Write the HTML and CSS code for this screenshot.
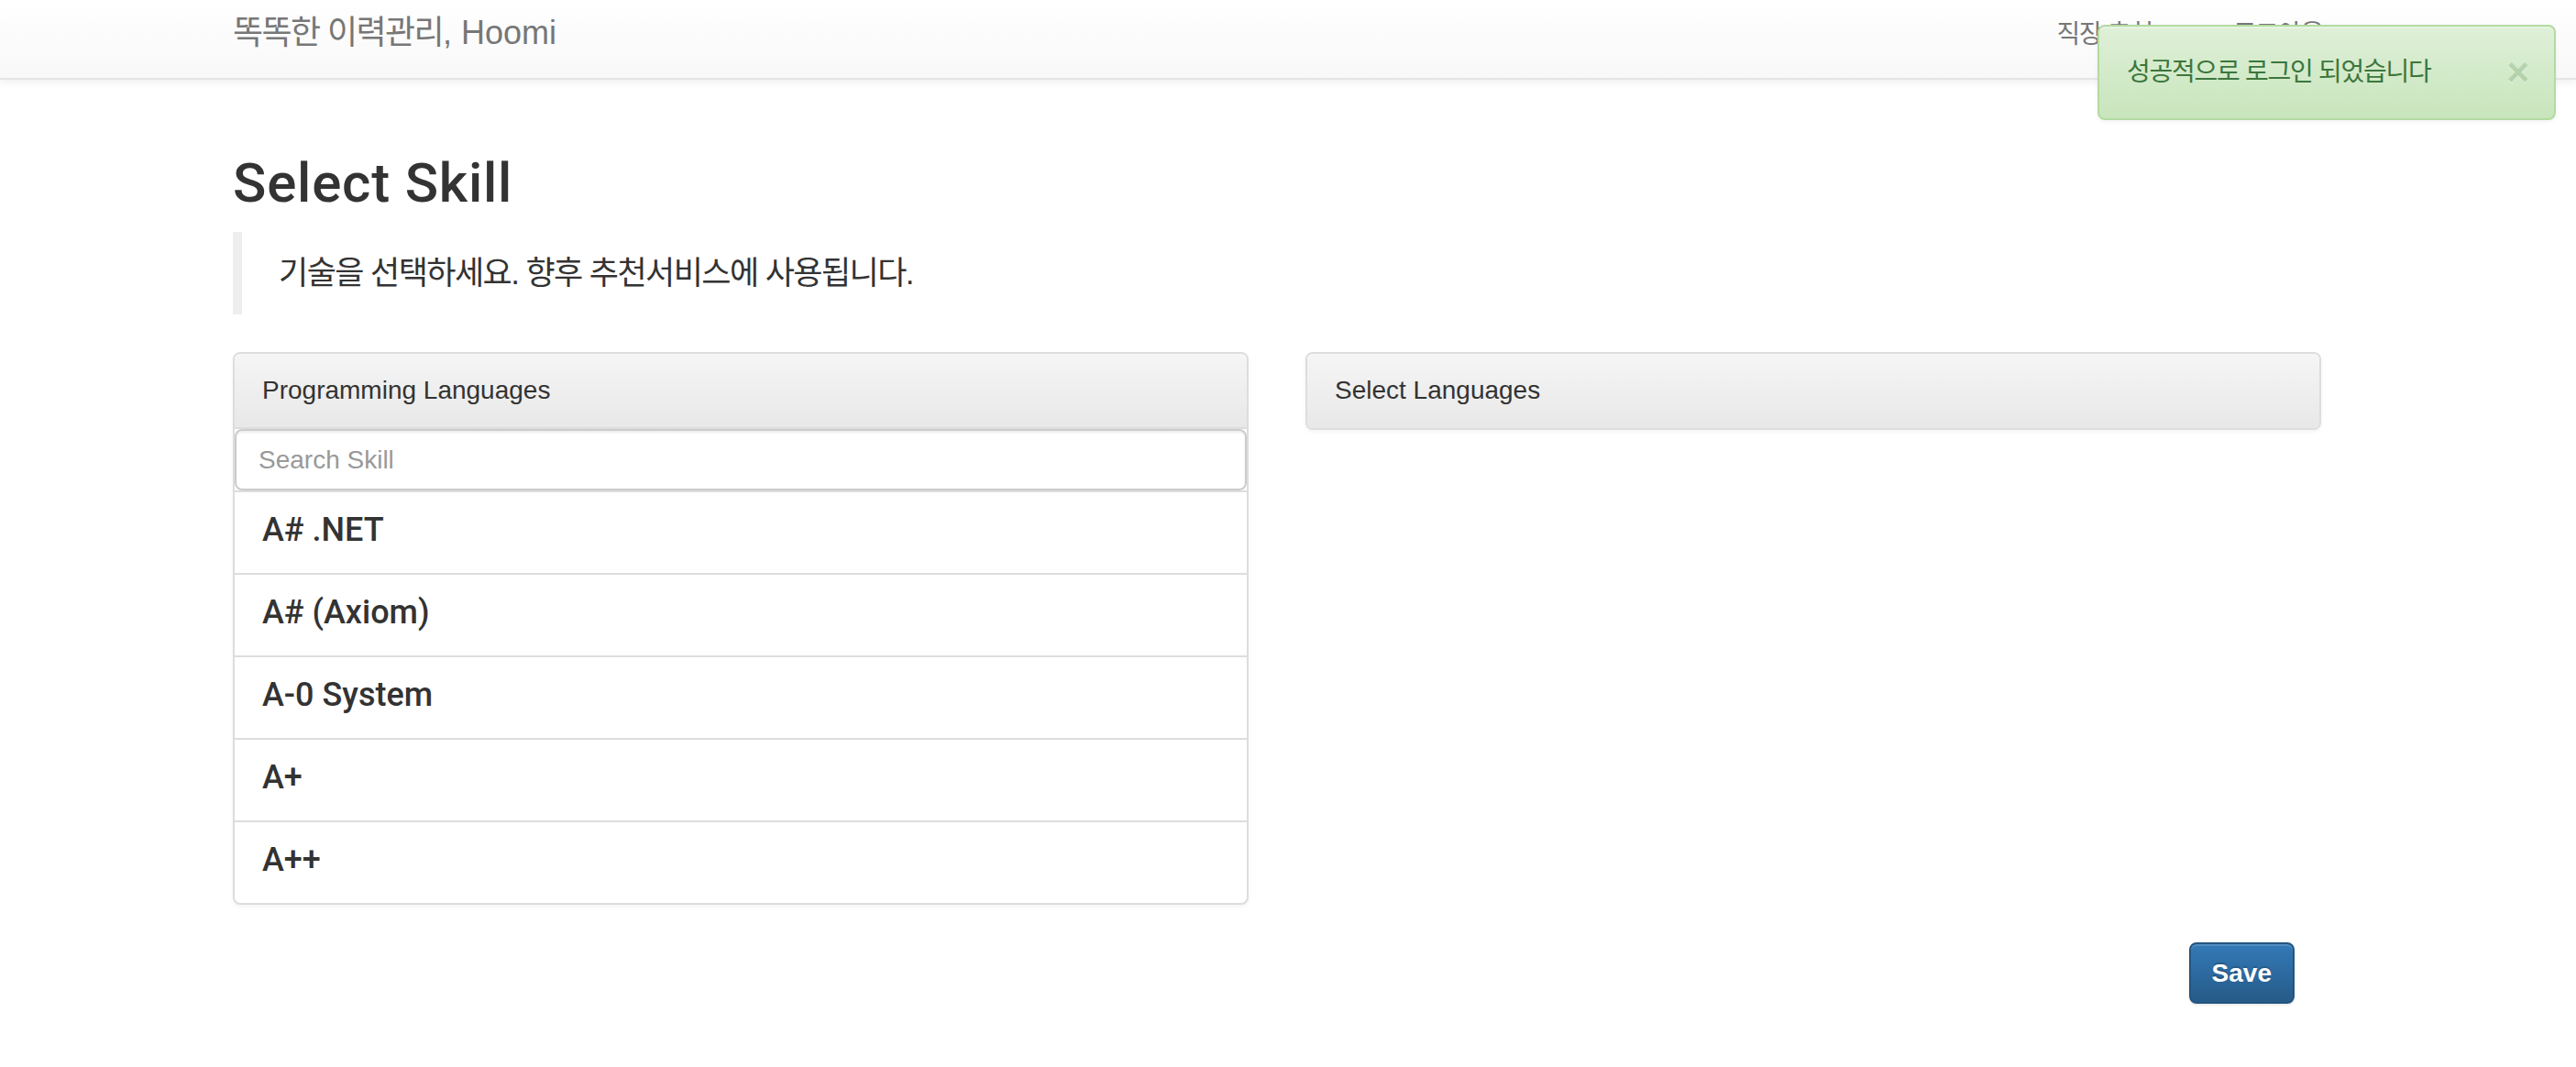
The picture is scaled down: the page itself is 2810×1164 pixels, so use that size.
FILE: index.html
```html
<!DOCTYPE html>
<html lang="ko">
<head>
<meta charset="utf-8">
<title>Select Skill - Hoomi</title>
<link rel="stylesheet" href="styles.css">
</head>
<body>
<nav class="navbar">
  <div class="navbar-inner">
    <a class="brand" href="#"><span class="ko">똑똑한 이력관리</span>, Hoomi</a>
    <ul class="nav-right">
      <li><a class="ko" href="#">직장 추천</a></li>
      <li><a class="ko" href="#">로그아웃</a></li>
    </ul>
  </div>
</nav>

<div class="alert-success">
  <span class="ko">성공적으로 로그인 되었습니다</span>
  <button class="close" type="button">×</button>
</div>

<main class="container">
  <h1 class="title">Select Skill</h1>
  <blockquote class="lead-quote ko">기술을 선택하세요. 향후 추천서비스에 사용됩니다.</blockquote>

  <div class="panels">
    <section class="panel">
      <div class="panel-heading">Programming Languages</div>
      <input class="search" type="text" placeholder="Search Skill">
      <ul class="list-group">
        <li class="list-item">A# .NET</li>
        <li class="list-item">A# (Axiom)</li>
        <li class="list-item">A-0 System</li>
        <li class="list-item">A+</li>
        <li class="list-item">A++</li>
      </ul>
    </section>
    <section class="panel">
      <div class="panel-heading panel-heading-only">Select Languages</div>
    </section>
  </div>

  <div class="actions">
    <button class="btn-primary" type="button">Save</button>
  </div>
</main>
</body>
</html>
```

FILE: styles.css
```css
* { box-sizing: border-box; }

html, body {
  margin: 0;
  padding: 0;
  background: #fff;
}

body {
  font-family: "Liberation Sans", "Noto Sans CJK KR", Arial, sans-serif;
  font-size: 28px;
  line-height: 40px;
  color: #333;
  width: 2810px;
  min-height: 1164px;
  position: relative;
  overflow: hidden;
}

.ko { letter-spacing: -0.045em; }

/* ---------- navbar ---------- */
.navbar {
  height: 87px;
  background: linear-gradient(#ffffff, #f8f8f8);
  border-bottom: 2px solid #e4e4e4;
  box-shadow: 0 2px 10px rgba(0, 0, 0, 0.075);
}

.navbar-inner {
  width: 2280px;
  margin-left: 254px;
  display: flex;
  justify-content: space-between;
  align-items: flex-start;
}

.brand {
  display: block;
  padding-top: 16px;
  font-size: 36px;
  line-height: 40px;
  color: #777;
  text-decoration: none;
}

.nav-right {
  display: flex;
  list-style: none;
  margin: 0 -44px 0 0;
  padding: 18px 0 0;
}

.nav-right a {
  display: block;
  padding: 0 44px;
  font-size: 28px;
  line-height: 40px;
  color: #777;
  text-decoration: none;
}

/* ---------- alert ---------- */
.alert-success {
  position: absolute;
  top: 27px;
  right: 22px;
  width: 500px;
  padding: 30px 70px 30px 30px;
  border: 2px solid #b2dba1;
  border-radius: 8px;
  background: linear-gradient(#dff0d8, #c8e5bc);
  color: #3c763d;
  font-size: 28px;
  line-height: 40px;
  box-shadow: inset 0 2px 0 rgba(255, 255, 255, 0.25), 0 2px 4px rgba(0, 0, 0, 0.05);
}

.close {
  position: absolute;
  top: 29px;
  right: 27px;
  margin: 0;
  padding: 0;
  border: 0;
  background: transparent;
  font-family: "Liberation Sans", Arial, sans-serif;
  font-size: 42px;
  font-weight: 700;
  line-height: 42px;
  color: #3c763d;
  opacity: 0.2;
  text-shadow: 0 2px 0 #fff;
  cursor: pointer;
}

/* ---------- main ---------- */
.container {
  width: 2280px;
  margin-left: 254px;
  padding-top: 80px;
}

.title {
  margin: 0;
  font-family: Roboto, "Liberation Sans", sans-serif;
  font-weight: 500;
  font-size: 60px;
  line-height: 66px;
  letter-spacing: 0.8px;
  color: #333;
}

.lead-quote {
  margin: 20px 0 41px;
  padding: 20px 40px;
  border-left: 10px solid #eee;
  font-size: 35px;
  line-height: 50px;
  color: #333;
}

.panels {
  display: grid;
  grid-template-columns: 1108px 1108px;
  column-gap: 62px;
  align-items: start;
}

.panel {
  border: 2px solid #ddd;
  border-radius: 8px;
  background: #fff;
  box-shadow: 0 2px 4px rgba(0, 0, 0, 0.05);
  overflow: hidden;
}

.panel-heading {
  padding: 20px 30px;
  font-size: 28px;
  line-height: 40px;
  color: #333;
  background: linear-gradient(#f5f5f5, #e8e8e8);
  border-bottom: 2px solid #ddd;
}

.panel-heading-only {
  border-bottom: 0;
  padding-bottom: 21px;
}

.search {
  display: block;
  width: 100%;
  height: 67px;
  margin: 0;
  padding: 12px 24px;
  border: 2px solid #ccc;
  border-radius: 8px;
  font-family: "Liberation Sans", Arial, sans-serif;
  font-size: 28px;
  line-height: 40px;
  color: #555;
  background: #fff;
  box-shadow: inset 0 2px 2px rgba(0, 0, 0, 0.075);
  outline: none;
}

.search::placeholder { color: #999; }

.list-group {
  list-style: none;
  margin: 0;
  padding: 0;
}

.list-item {
  padding: 17px 30px 23px;
  border-top: 2px solid #ddd;
  font-family: Roboto, "Liberation Sans", sans-serif;
  font-weight: 500;
  font-size: 36px;
  line-height: 48px;
  color: #333;
}

.actions {
  display: flex;
  justify-content: flex-end;
  margin-top: 41px;
  padding-right: 31px;
}

.btn-primary {
  height: 67px;
  padding: 12px 23px;
  border: 2px solid #245580;
  border-radius: 8px;
  background: linear-gradient(#337ab7, #265a88);
  color: #fff;
  font-family: "Liberation Sans", Arial, sans-serif;
  font-size: 28px;
  font-weight: 700;
  line-height: 40px;
  text-shadow: 0 -2px 0 rgba(0, 0, 0, 0.2);
  box-shadow: inset 0 2px 0 rgba(255, 255, 255, 0.15), 0 2px 2px rgba(0, 0, 0, 0.075);
  cursor: pointer;
}
```
